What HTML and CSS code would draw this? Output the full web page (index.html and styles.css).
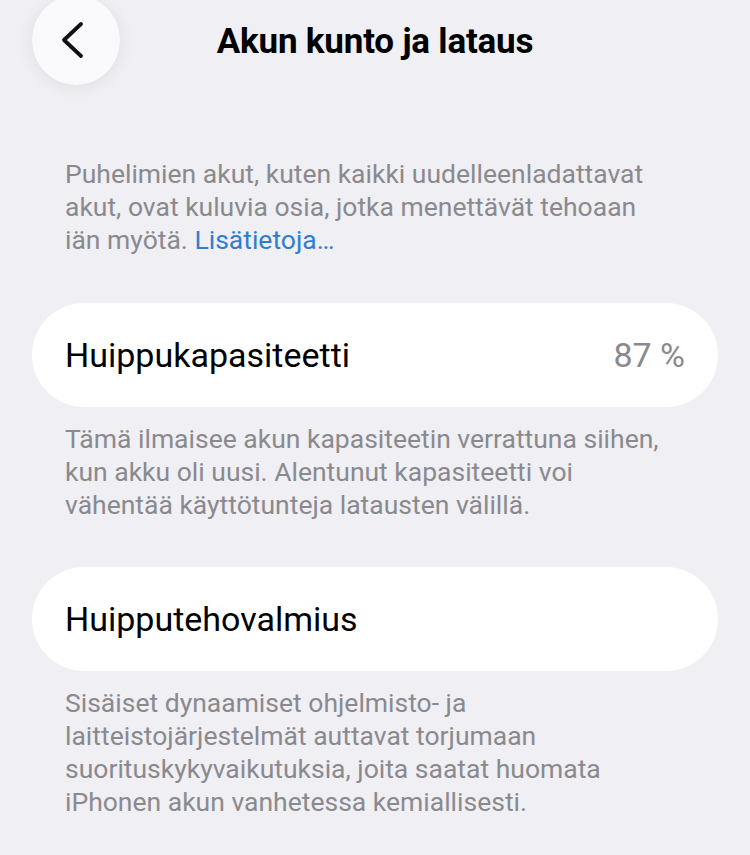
FILE: index.html
```html
<!DOCTYPE html>
<html lang="fi">
<head>
    <meta charset="UTF-8">
    <meta name="viewport" content="width=device-width, initial-scale=1.0">
    <title>Akun kunto ja lataus</title>
    <link rel="stylesheet" href="styles.css">
</head>
<body>

<div class="screen">
    <!-- Yläpalkki -->
    <header class="nav-bar">
        <button class="back-button" aria-label="Takaisin">
            <svg width="26" height="38" viewBox="0 0 26 38">
                <path d="M22 3 L5 19 L22 35" fill="none" stroke="#111" stroke-width="3.8" stroke-linecap="round" stroke-linejoin="round"/>
            </svg>
        </button>
        <h1 class="nav-title">Akun kunto ja lataus</h1>
    </header>

    <p class="intro">
        Puhelimien akut, kuten kaikki uudelleenladattavat<br>
        akut, ovat kuluvia osia, jotka menettävät tehoaan<br>
        iän myötä. <a href="#" class="link">Lisätietoja…</a>
    </p>

    <!-- Huippukapasiteetti -->
    <div class="group">
        <div class="row">
            <span class="row-label">Huippukapasiteetti</span>
            <span class="row-value">87 %</span>
        </div>
    </div>
    <p class="footer-text">
        Tämä ilmaisee akun kapasiteetin verrattuna siihen,<br>
        kun akku oli uusi. Alentunut kapasiteetti voi<br>
        vähentää käyttötunteja latausten välillä.
    </p>

    <!-- Huipputehovalmius -->
    <div class="group">
        <div class="row">
            <span class="row-label">Huipputehovalmius</span>
        </div>
    </div>
    <p class="footer-text">
        Sisäiset dynaamiset ohjelmisto- ja<br>
        laitteistojärjestelmät auttavat torjumaan<br>
        suorituskykyvaikutuksia, joita saatat huomata<br>
        iPhonen akun vanhetessa kemiallisesti.
    </p>
</div>

</body>
</html>
```

FILE: styles.css
```css
* {
    box-sizing: border-box;
}

body {
    margin: 0;
    padding: 0;
    background-color: #f0eff4;
    font-family: Roboto, "Liberation Sans", sans-serif;
    color: #000;
    overflow: hidden;
}

.screen {
    width: 750px;
    height: 855px;
    padding: 0 32px;
}

.nav-bar {
    position: relative;
    height: 85px;
    display: flex;
    align-items: center;
    justify-content: center;
    margin-top: -5px;
}

.back-button {
    position: absolute;
    left: 0;
    top: 0;
    width: 88px;
    height: 90px;
    border: none;
    border-radius: 50%;
    background-color: #fafafc;
    box-shadow: 0 2px 18px rgba(0, 0, 0, 0.07);
    display: flex;
    align-items: center;
    justify-content: center;
    padding: 0 8px 0 0;
    cursor: pointer;
}

.nav-title {
    margin: 8px 0 0 0;
    font-size: 35px;
    font-weight: 700;
    letter-spacing: -0.2px;
}

.intro,
.footer-text {
    margin: 0;
    padding: 0 10px 0 33px;
    font-size: 26.5px;
    line-height: 33px;
    color: #8a8a8e;
    white-space: nowrap;
}

.intro {
    margin-top: 77px;
    margin-bottom: 47px;
}

.link {
    color: #2f7dd0;
    text-decoration: none;
}

.group {
    background-color: #fff;
    border-radius: 52px;
}

.row {
    height: 104px;
    display: flex;
    align-items: center;
    justify-content: space-between;
    padding: 0 33px;
    font-size: 34px;
}

.row-value {
    color: #8a8a8e;
}

.footer-text {
    margin-top: 15px;
    margin-bottom: 46px;
}
```
